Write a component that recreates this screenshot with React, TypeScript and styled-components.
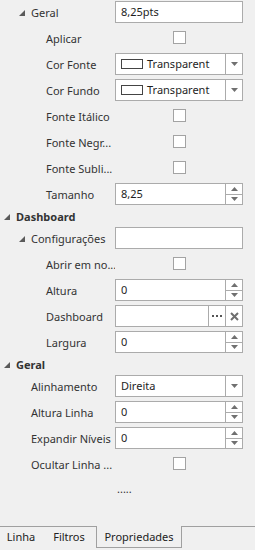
import React from "react";
import styled, { createGlobalStyle } from "styled-components";

const Global = createGlobalStyle`
  html, body { margin: 0; padding: 0; background: #f0f0f0; }
  body { font-family: "Noto Sans", "Open Sans", sans-serif; font-size: 11px; line-height: 14px; color: #222; }
`;

const Panel = styled.div`
  width: 255px;
  height: 550px;
  display: flex;
  flex-direction: column;
  background: #f0f0f0;
  overflow: hidden;
`;

const Grid = styled.div`
  flex: 1;
  display: flex;
  flex-direction: column;
`;

const Row = styled.div`
  display: grid;
  grid-template-columns: 115px 128px;
  height: 26px;
`;

const CategoryRow = styled.div<{ $level: number }>`
  display: flex;
  align-items: center;
  height: 18px;
  padding-left: ${(p) => 4 + p.$level * 15}px;
  padding-bottom: 1px;
  box-sizing: border-box;
  gap: 6px;
  font-weight: bold;
  color: #333;
`;

const Label = styled.div<{ $level: number; $expander?: boolean }>`
  display: flex;
  align-items: center;
  gap: 6px;
  padding-left: ${(p) => (p.$expander ? 4 + p.$level * 15 : 16 + p.$level * 15)}px;
  padding-bottom: 1px;
  white-space: nowrap;
  overflow: hidden;
  color: #333;
`;

const Cell = styled.div`
  display: flex;
  align-items: flex-start;
  padding-top: 1px;
`;

const CheckCell = styled.div`
  display: flex;
  justify-content: center;
  padding-top: 5px;
  padding-left: 1px;
`;

const Check = styled.div`
  width: 11px;
  height: 11px;
  border: 1px solid #a3a3a3;
  background: #fff;
`;

const Box = styled.div`
  width: 128px;
  height: 22px;
  box-sizing: border-box;
  border: 1px solid #ababab;
  background: #fff;
  display: flex;
  align-items: stretch;
`;

const Text = styled.div`
  flex: 1;
  display: flex;
  align-items: center;
  gap: 4px;
  padding-left: 5px;
  padding-bottom: 1px;
  color: #1e1e1e;
  white-space: nowrap;
  overflow: hidden;
`;

const Swatch = styled.span`
  width: 20px;
  height: 8px;
  border: 1px solid #444;
  background: #fff;
  flex: none;
`;

const Btn = styled.div`
  width: 16px;
  border-left: 1px solid #ababab;
  background: #fff;
  display: flex;
  align-items: center;
  justify-content: center;
  flex: none;
`;

const Spin = styled.div`
  width: 16px;
  border-left: 1px solid #ababab;
  display: flex;
  flex-direction: column;
  flex: none;
`;

const SpinHalf = styled.div<{ $top?: boolean }>`
  flex: 1;
  display: flex;
  align-items: center;
  justify-content: center;
  background: #fff;
  border-top: ${(p) => (p.$top ? "none" : "1px solid #ababab")};
`;

const Dots = styled.div`
  display: flex;
  align-items: center;
  padding-left: 2px;
  height: 22px;
  color: #333;
`;

const TabBar = styled.div`
  height: 24px;
  display: flex;
  align-items: flex-start;
  border-top: 1px solid #a0a0a0;
  box-sizing: border-box;
`;

const Tab = styled.div<{ $active?: boolean; $w: number }>`
  width: ${(p) => p.$w}px;
  display: flex;
  align-items: center;
  justify-content: center;
  color: #222;
  box-sizing: border-box;
  margin-top: ${(p) => (p.$active ? "-1px" : "0")};
  height: ${(p) => (p.$active ? "22px" : "20px")};
  background: #f0f0f0;
  border: ${(p) => (p.$active ? "1px solid #a0a0a0" : "none")};
  border-top: none;
`;

const Expander = () => (
  <svg width="6" height="6" viewBox="0 0 6 6" style={{ flex: "none" }}>
    <polygon points="6,0 6,6 0,6" fill="#5a5a5a" />
  </svg>
);

const DownArrow = () => (
  <svg width="7" height="4" viewBox="0 0 7 4">
    <polygon points="0,0 7,0 3.5,4" fill="#707070" />
  </svg>
);

const UpArrow = () => (
  <svg width="7" height="4" viewBox="0 0 7 4">
    <polygon points="0,4 7,4 3.5,0" fill="#707070" />
  </svg>
);

const XIcon = () => (
  <svg width="9" height="9" viewBox="0 0 9 9">
    <path d="M1 1 L8 8 M8 1 L1 8" stroke="#6e6e6e" strokeWidth="2" />
  </svg>
);

const Ellipsis = () => (
  <svg width="11" height="3" viewBox="0 0 11 3">
    <rect x="0" y="0" width="2" height="2" fill="#555" />
    <rect x="4" y="0" width="2" height="2" fill="#555" />
    <rect x="8" y="0" width="2" height="2" fill="#555" />
  </svg>
);

const TextEditor = ({ value }: { value: string }) => (
  <Cell>
    <Box>
      <Text>{value}</Text>
    </Box>
  </Cell>
);

const SpinEditor = ({ value }: { value: string }) => (
  <Cell>
    <Box>
      <Text>{value}</Text>
      <Spin>
        <SpinHalf $top>
          <UpArrow />
        </SpinHalf>
        <SpinHalf>
          <DownArrow />
        </SpinHalf>
      </Spin>
    </Box>
  </Cell>
);

const ComboEditor = ({ value, swatch }: { value: string; swatch?: boolean }) => (
  <Cell>
    <Box>
      <Text>
        {swatch && <Swatch />}
        {value}
      </Text>
      <Btn>
        <DownArrow />
      </Btn>
    </Box>
  </Cell>
);

const CheckEditor = () => (
  <CheckCell>
    <Check />
  </CheckCell>
);

const Prop = ({
  label,
  level,
  expander,
  children,
}: {
  label: string;
  level: number;
  expander?: boolean;
  children: React.ReactNode;
}) => (
  <Row>
    <Label $level={level} $expander={expander}>
      {expander && <Expander />}
      {label}
    </Label>
    {children}
  </Row>
);

export default function App() {
  return (
    <>
      <Global />
      <Panel>
        <Grid>
          <Prop label="Geral" level={1} expander>
            <TextEditor value="8,25pts" />
          </Prop>
          <Prop label="Aplicar" level={2}>
            <CheckEditor />
          </Prop>
          <Prop label="Cor Fonte" level={2}>
            <ComboEditor value="Transparent" swatch />
          </Prop>
          <Prop label="Cor Fundo" level={2}>
            <ComboEditor value="Transparent" swatch />
          </Prop>
          <Prop label="Fonte Itálico" level={2}>
            <CheckEditor />
          </Prop>
          <Prop label="Fonte Negr..." level={2}>
            <CheckEditor />
          </Prop>
          <Prop label="Fonte Subli..." level={2}>
            <CheckEditor />
          </Prop>
          <Prop label="Tamanho" level={2}>
            <SpinEditor value="8,25" />
          </Prop>
          <CategoryRow $level={0}>
            <Expander />
            Dashboard
          </CategoryRow>
          <Prop label="Configurações" level={1} expander>
            <TextEditor value="" />
          </Prop>
          <Prop label="Abrir em no..." level={2}>
            <CheckEditor />
          </Prop>
          <Prop label="Altura" level={2}>
            <SpinEditor value="0" />
          </Prop>
          <Prop label="Dashboard" level={2}>
            <Cell>
              <Box>
                <Text />
                <Btn>
                  <Ellipsis />
                </Btn>
                <Btn>
                  <XIcon />
                </Btn>
              </Box>
            </Cell>
          </Prop>
          <Prop label="Largura" level={2}>
            <SpinEditor value="0" />
          </Prop>
          <CategoryRow $level={0}>
            <Expander />
            Geral
          </CategoryRow>
          <Prop label="Alinhamento" level={1}>
            <ComboEditor value="Direita" />
          </Prop>
          <Prop label="Altura Linha" level={1}>
            <SpinEditor value="0" />
          </Prop>
          <Prop label="Expandir Níveis" level={1}>
            <SpinEditor value="0" />
          </Prop>
          <Prop label="Ocultar Linha ..." level={1}>
            <CheckEditor />
          </Prop>
          <Row>
            <div />
            <Dots>.....</Dots>
          </Row>
        </Grid>
        <TabBar>
          <Tab $w={42}>Linha</Tab>
          <Tab $w={54}>Filtros</Tab>
          <Tab $w={86} $active>
            Propriedades
          </Tab>
        </TabBar>
      </Panel>
    </>
  );
}
